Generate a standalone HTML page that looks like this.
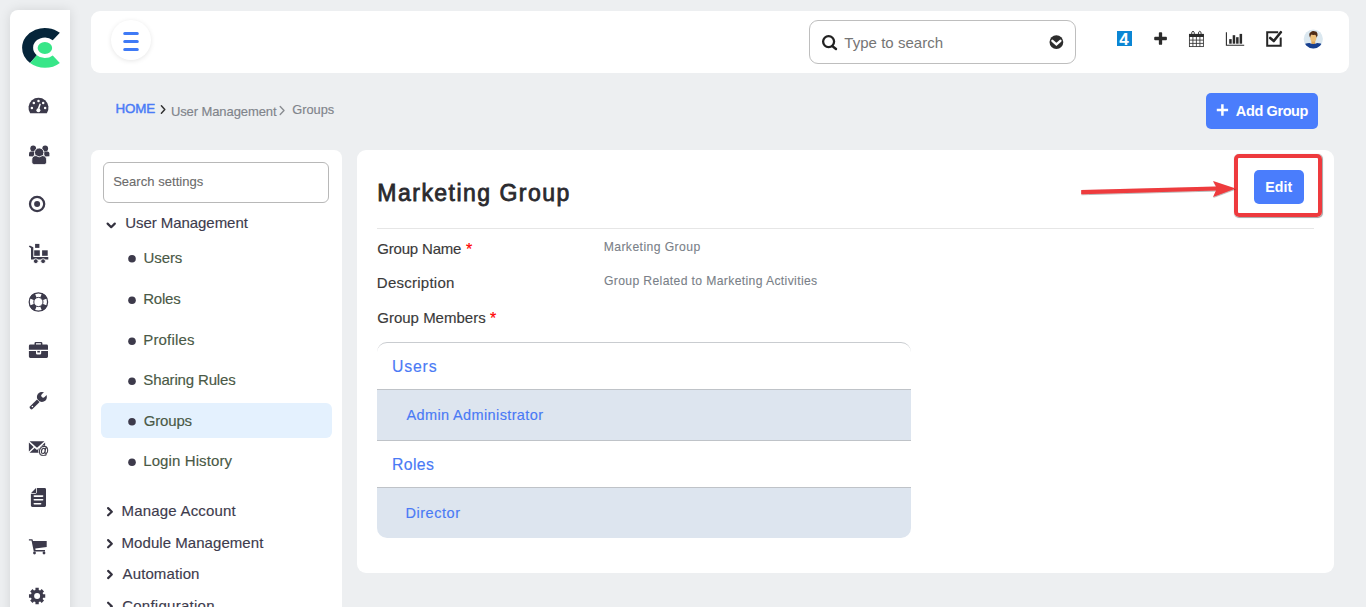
<!DOCTYPE html>
<html lang="en">
<head>
<meta charset="utf-8">
<title>Groups - Marketing Group</title>
<style>
*{box-sizing:border-box;margin:0;padding:0}
html,body{width:1366px;height:607px;overflow:hidden}
body{background:#edeff1;font-family:"Liberation Sans",sans-serif;color:#333;position:relative}
.abs{position:absolute}
.t{position:absolute;white-space:nowrap;line-height:1}
#rail{left:10px;top:10px;width:60px;height:620px;background:#fff;border-radius:8px 0 0 0;box-shadow:0 0 12px rgba(0,0,0,.11)}
#topbar{left:91px;top:11px;width:1258px;height:62px;background:#fff;border-radius:9px}
#burger{left:111px;top:20px;width:40px;height:40px;border-radius:50%;background:#fff;box-shadow:0 1px 5px rgba(0,0,0,.10)}
#search{left:809px;top:20px;width:267px;height:44px;border:1px solid #bebebe;border-radius:9px;background:#fff}
#addbtn{left:1206px;top:93px;width:112px;height:36px;background:#4a7dfc;border-radius:5px}
#setpanel{left:91px;top:150px;width:251px;height:480px;background:#fff;border-radius:8px 8px 0 0}
#setsearch{left:103px;top:162px;width:226px;height:41px;border:1px solid #b8b8b8;border-radius:6px;background:#fff}
#hl{left:101px;top:403px;width:231px;height:35px;background:#e4f1fe;border-radius:6px}
#main{left:357px;top:150px;width:977px;height:423px;background:#fff;border-radius:9px}
#hr{left:377px;top:228px;width:937px;height:1px;background:#e6e6e6}
#tbl{left:377px;top:342px;width:534px;height:196px;border-radius:10px;overflow:hidden;border-top:1px solid #c9ccd0;background:#fff}
.row{position:absolute;left:0;width:534px;background:#dde5ef}
.sep{position:absolute;left:0;width:534px;height:1px;background:#bfc3c8}
#editbtn{left:1254px;top:170px;width:50px;height:34px;background:#4a7dfc;border-radius:5px}
#redbox{left:1234px;top:154px;width:88px;height:62.5px;border:4px solid #ee3a3e;border-radius:5px;box-shadow:.4px .6px .8px rgba(0,0,0,.35)}
.dot{position:absolute;width:7.4px;height:7.4px;border-radius:50%;background:#3d3a4b;left:128.3px}
</style>
</head>
<body>
<div id="rail" class="abs"></div>
<svg class="abs" style="left:10px;top:10px" width="60" height="597" viewBox="10 10 60 597">
  <!-- logo -->
  <g id="logo">
    <path d="M59.86 32.84 A22.8 19.9 0 0 0 22.10 47.86 A22.8 19.9 0 0 0 30.07 62.97 L36.81 55.28 A11.8 10.2 0 0 1 33.10 47.86 A11.8 10.2 0 0 1 52.74 40.24 Z" fill="#05253a"/>
    <path d="M30.07 62.97 A22.8 19.9 0 0 0 59.86 62.88 L52.74 55.48 A11.8 10.2 0 0 1 36.81 55.28 Z" fill="#37e688"/>
    <ellipse cx="44.9" cy="48" rx="7.25" ry="6.05" fill="#37e688"/>
  </g>
<!--ICONS-->
  <g fill="#3c3a4b" stroke="none">
    <!-- dashboard -->
    <path d="M30.2 113.3 A10 10 0 1 1 46.8 113.3 Z"/>
    <g fill="#fff"><circle cx="31.9" cy="107.9" r="1.25"/><circle cx="33.8" cy="103.1" r="1.25"/><circle cx="38.5" cy="101.1" r="1.25"/><circle cx="43.2" cy="103.1" r="1.25"/><circle cx="45.1" cy="107.9" r="1.25"/>
      <path d="M39.6 103.6 L40.9 103.9 L39.3 109.0 L37.7 108.6 Z"/><circle cx="38.4" cy="110.3" r="2"/></g>
    <!-- users -->
    <circle cx="33.2" cy="148.4" r="2.9"/><circle cx="45.2" cy="148.4" r="2.9"/>
    <path d="M29 156.2 V153.6 Q29 151.6 31 151.6 H35.2 L33.4 156.4 Z"/>
    <path d="M49.4 156.2 V153.6 Q49.4 151.6 47.4 151.6 H43.2 L45 156.4 Z"/>
    <circle cx="39.2" cy="152.6" r="4.7" stroke="#fff" stroke-width="1"/>
    <path d="M31.8 162.2 V160 Q31.8 155.8 36 155.6 Q39.2 158.2 42.4 155.6 Q46.6 155.8 46.6 160 V162.2 Q46.6 164.6 44.2 164.6 H34.2 Q31.8 164.6 31.8 162.2 Z" stroke="#fff" stroke-width=".8"/>
    <!-- target -->
    <circle cx="37.1" cy="204" r="7.1" fill="none" stroke="#3c3a4b" stroke-width="2.3"/><circle cx="37.1" cy="204" r="3"/>
    <!-- dolly -->
    <path d="M28.8 246.6 L29.8 245.6 L33.3 247.3 V257 H48.3 V259.6 H31 V248.2 Z"/>
    <rect x="35.1" y="243.9" width="4.3" height="4"/><rect x="34.2" y="250.3" width="5.6" height="5.5"/><rect x="42.1" y="250.3" width="5.6" height="5.5"/>
    <circle cx="35.8" cy="261.2" r="2.4" stroke="#fff" stroke-width=".9"/><circle cx="43.1" cy="261.2" r="2.4" stroke="#fff" stroke-width=".9"/>
    <!-- life ring -->
    <circle cx="38.4" cy="302" r="9.2" fill="#fff" stroke="#3c3a4b" stroke-width="1.25"/>
    <path d="M38.4 302 L42.11 293.04 A9.7 9.7 0 0 1 47.36 298.29 Z M38.4 302 L47.36 305.71 A9.7 9.7 0 0 1 42.11 310.96 Z M38.4 302 L34.69 310.96 A9.7 9.7 0 0 1 29.44 305.71 Z M38.4 302 L29.44 298.29 A9.7 9.7 0 0 1 34.69 293.04 Z"/>
    <circle cx="38.4" cy="302" r="4.6" fill="#fff" stroke="#3c3a4b" stroke-width="1"/>
    <!-- briefcase -->
    <path d="M34.5 344.6 V343.2 Q34.5 341.9 35.8 341.9 H41.1 Q42.4 341.9 42.4 343.2 V344.6 H46.6 Q48 344.6 48 346 V349.8 H28.9 V346 Q28.9 344.6 30.3 344.6 Z M36 344.6 H40.9 V343.2 H36 Z" fill-rule="evenodd"/>
    <path d="M28.9 350.9 H36 V353.2 Q36 354.5 37.3 354.5 H39.9 Q41.2 354.5 41.2 353.2 V350.9 H48 V356.6 Q48 358 46.6 358 H30.3 Q28.9 358 28.9 356.6 Z"/>
    <rect x="37.3" y="350.9" width="2.6" height="1.6"/>
    <!-- wrench -->
    <circle cx="41.9" cy="397" r="5"/>
    <path d="M43.2 395.7 L48.6 390.3" stroke="#fff" stroke-width="4" stroke-linecap="round" fill="none"/>
    <path d="M37.3 399.2 L39.9 401.8 L32.5 409.1 Q31.4 409.9 30.3 408.8 Q29 407.4 29.9 406.4 Z"/>
    <path d="M36.3 398.5 L40.6 402.8" stroke="#fff" stroke-width=".7" fill="none"/>
    <circle cx="32.4" cy="406.5" r=".8" fill="#fff"/>
    <!-- mail @ -->
    <path d="M29.6 441.2 H44.4 L37 447.8 Z"/><path d="M28.9 442.6 L33.6 447 L28.9 451.4 Z"/><path d="M29.6 452.7 L34.6 447.9 L37 450 L39.4 447.9 L44.4 452.7 Z"/><path d="M45.1 442.6 V451 L40.4 447 Z"/>
    <circle cx="43.6" cy="451" r="5.4" fill="#fff"/>
    <!-- doc -->
    <path d="M36.8 487.9 H44.6 Q46 487.9 46 489.3 V505.6 Q46 507 44.6 507 H32.3 Q30.9 507 30.9 505.6 V493.7 H35.4 Q36.8 493.7 36.8 492.3 Z"/>
    <path d="M36 488 V492.9 H31.1 Z"/>
    <g fill="#fff"><rect x="33.5" y="495.3" width="9.9" height="1.6" rx=".8"/><rect x="33.5" y="499" width="9.9" height="1.6" rx=".8"/><rect x="33.5" y="502.9" width="7.9" height="1.6" rx=".8"/></g>
    <!-- cart -->
    <path d="M28.9 539.3 H32.4 L33 540.9 H46.7 V546.9 L35.3 548.6 L35.5 550 H45 V551.4 H33.8 L31.5 540.6 H28.9 Z"/>
    <circle cx="34.5" cy="553" r="1.4"/><circle cx="44" cy="553" r="1.4"/>
    <!-- gear -->
    <path d="M35.42 589.93 L35.45 587.87 L38.75 587.87 L38.78 589.93 L40.21 590.52 L41.69 589.08 L44.02 591.41 L42.58 592.89 L43.17 594.32 L45.23 594.35 L45.23 597.65 L43.17 597.68 L42.58 599.11 L44.02 600.59 L41.69 602.92 L40.21 601.48 L38.78 602.07 L38.75 604.13 L35.45 604.13 L35.42 602.07 L33.99 601.48 L32.51 602.92 L30.18 600.59 L31.62 599.11 L31.03 597.68 L28.97 597.65 L28.97 594.35 L31.03 594.32 L31.62 592.89 L30.18 591.41 L32.51 589.08 L33.99 590.52 Z"/><circle cx="37.1" cy="596" r="3" fill="#fff"/>
  </g>
<!--/ICONS-->
</svg>
<svg class="abs" style="left:36px;top:443px;will-change:transform" width="16" height="16" viewBox="36 443 16 16"><text x="43.7" y="454.4" font-family="Liberation Sans, sans-serif" font-size="10.5" text-anchor="middle" fill="#2e2c3a" stroke="#2e2c3a" stroke-width=".35">@</text></svg>
<div id="topbar" class="abs"></div>
<div id="burger" class="abs"></div>
<svg class="abs" style="left:120px;top:30px" width="22" height="23" viewBox="120 30 22 23">
  <g stroke="#3f7af6" stroke-width="3" stroke-linecap="round"><path d="M124.7 33.4H137.3M124.7 41.4H137.3M124.7 49.4H137.3"/></g>
</svg>
<div id="search" class="abs"></div>
<!-- top icons -->
<svg class="abs" style="left:810px;top:20px" width="524" height="44" viewBox="810 20 524 44">
  <circle cx="828.6" cy="41.6" r="5.5" fill="none" stroke="#222" stroke-width="2.3"/>
  <path d="M832.5 46.2 L836 49" stroke="#222" stroke-width="2.4" stroke-linecap="round"/>
  <circle cx="1056.4" cy="42.1" r="6.9" fill="#2d2d2d"/>
  <path d="M1052.4 40.8 L1056.4 44.4 L1060.4 40.8" fill="none" stroke="#fff" stroke-width="2.4" stroke-linecap="round" stroke-linejoin="miter"/>
  <rect x="1117" y="31" width="15" height="15" fill="#0b86d4"/>
  <text x="1124.1" y="45.1" font-family="Liberation Sans, sans-serif" font-size="17" font-weight="bold" text-anchor="middle" fill="#fff">4</text>
  <g fill="#2b2b2b"><rect x="1158.85" y="32.2" width="3.3" height="12.6" rx=".9"/><rect x="1154.2" y="36.85" width="12.7" height="3.3" rx=".9"/></g>
  <!-- calendar -->
  <g fill="none" stroke="#333" stroke-width=".85">
    <rect x="1189.4" y="34.3" width="14" height="12.3"/>
    <path d="M1192.9 36.8 V46.6 M1196.4 36.8 V46.6 M1199.9 36.8 V46.6 M1189.4 40.1 H1203.4 M1189.4 43.4 H1203.4"/>
  </g>
  <rect x="1189" y="34" width="14.8" height="3" fill="#2b2b2b"/>
  <g fill="none" stroke="#333" stroke-width=".9"><path d="M1191.6 34.2 A1.4 3 0 0 1 1194.4 34.2 M1198.4 34.2 A1.4 3 0 0 1 1201.2 34.2"/></g>
  <!-- chart -->
  <path d="M1226.4 32.2 V45.3 H1244.2" fill="none" stroke="#2b2b2b" stroke-width="1.1"/>
  <g fill="#2b2b2b"><rect x="1229.2" y="39.1" width="2.5" height="4.6"/><rect x="1232.7" y="35.2" width="2.5" height="8.5"/><rect x="1236.1" y="37.2" width="2.5" height="6.5"/><rect x="1239.6" y="33.9" width="2.5" height="9.8"/></g>
  <!-- check square -->
  <path d="M1278.2 32.2 H1267.2 V45.7 H1280.7 V37.6" fill="none" stroke="#262626" stroke-width="2"/>
  <path d="M1270.2 38 L1273.8 41 L1280.8 32.2" fill="none" stroke="#262626" stroke-width="2.6" stroke-linecap="round" stroke-linejoin="round"/>
  <!-- avatar -->
  <clipPath id="avc"><circle cx="1313.3" cy="39" r="9.6"/></clipPath>
  <g clip-path="url(#avc)">
    <rect x="1303" y="29" width="21" height="21" fill="#dbe8f0"/>
    <rect x="1311.4" y="39.5" width="3.8" height="4.6" fill="#dfa75a"/>
    <path d="M1302.6 47 Q1303.6 43.4 1309.4 43.1 Q1313.3 44.9 1317.2 43.1 Q1323 43.4 1324 47 V50 H1302.6 Z" fill="#173f8f"/>
    <ellipse cx="1313.3" cy="37.8" rx="3.1" ry="3.9" fill="#edc07a"/>
    <path d="M1310.1 37.8 Q1308.2 33.6 1310.6 32.2 Q1312.6 30.4 1314.6 31.3 Q1317 31.4 1317.4 33.4 Q1318.2 35 1316.5 37.8 Q1316.4 35.4 1315 34.7 Q1312.6 35.3 1311.5 34.6 Q1310.4 35.6 1310.1 37.8 Z" fill="#4f2c15"/>
  </g>
</svg>
<div id="addbtn" class="abs"></div>
<svg class="abs" style="left:1214px;top:102px" width="17" height="16" viewBox="1214 102 17 16"><path d="M1222.4 104.3 V115.7 M1216.8 110 H1228.1" stroke="#fff" stroke-width="2.5"/></svg>
<div id="setpanel" class="abs"></div>
<div id="setsearch" class="abs"></div>
<div id="hl" class="abs"></div>
<svg class="abs" style="left:100px;top:100px" width="200" height="507" viewBox="100 100 200 507" fill="none" stroke-linecap="round" stroke-linejoin="round">
  <path d="M161.4 105.8 L164.8 109.5 L161.4 113.2" stroke="#333" stroke-width="1.5"/>
  <path d="M280.2 106.4 L284 110.5 L280.2 114.6" stroke="#8a8d92" stroke-width="1.4"/>
  <g fill="#3d3a4b" stroke="none"><circle cx="132" cy="258.8" r="3.8"/><circle cx="132" cy="300.2" r="3.8"/><circle cx="132" cy="341.3" r="3.8"/><circle cx="132" cy="381.2" r="3.8"/><circle cx="132" cy="421.7" r="3.8"/><circle cx="132" cy="462.2" r="3.8"/></g>
  <g stroke="#34323f" stroke-width="2.2">
    <path d="M107.6 223.6 L111.2 227.2 L114.8 223.6"/>
    <path d="M108.1 508.1 L111.8 511.7 L108.1 515.3"/>
    <path d="M108.1 540.1 L111.8 543.7 L108.1 547.3"/>
    <path d="M108.1 570.9 L111.8 574.5 L108.1 578.1"/>
    <path d="M108.1 602.7 L111.8 606.3 L108.1 609.9"/>
  </g>
</svg>
<div id="main" class="abs"></div>
<div id="hr" class="abs"></div>
<div id="tbl" class="abs">
  <div class="sep" style="top:46px"></div>
  <div class="row" style="top:47px;height:50px"></div>
  <div class="sep" style="top:96.7px"></div>
  <div class="sep" style="top:143.7px"></div>
  <div class="row" style="top:144.7px;height:52px"></div>
</div>
<div id="editbtn" class="abs"></div>
<div id="redbox" class="abs"></div>
<svg class="abs" style="left:1075px;top:170px" width="170" height="40" viewBox="1075 170 170 40">
  <defs><filter id="ash" x="-5%" y="-30%" width="110%" height="160%"><feDropShadow dx=".4" dy=".7" stdDeviation=".35" flood-color="#000" flood-opacity=".4"/></filter></defs>
  <path d="M1081.2 190 L1216 186.6 L1213 181.1 L1235.6 188.5 L1213 197 L1216 190.4 L1081.2 194.3 Z" fill="#ee3a3e" filter="url(#ash)"/>
</svg>
<div class="t" id="tsearch" style="left:844.29px;top:34.90px;font-size:15px;color:#757575;letter-spacing:0.037px">Type to search</div>
<div class="t" id="home" style="left:115.57px;top:101.56px;font-size:13.4px;color:#4a7bf7;letter-spacing:-0.212px;-webkit-text-stroke:0.45px #4a7bf7">HOME</div>
<div class="t" id="bcum" style="left:170.89px;top:105.00px;font-size:13px;color:#80848b;letter-spacing:-0.091px;-webkit-text-stroke:0.15px #80848b">User Management</div>
<div class="t" id="bcgr" style="left:292.22px;top:104.06px;font-size:12.8px;color:#80848b;letter-spacing:0.006px;-webkit-text-stroke:0.15px #80848b">Groups</div>
<div class="t" id="addg" style="left:1235.87px;top:103.83px;font-size:14.5px;color:#fff;font-weight:bold;letter-spacing:-0.395px">Add Group</div>
<div class="t" id="ssearch" style="left:113.13px;top:175.20px;font-size:13px;color:#6b6b6b;letter-spacing:0.037px;-webkit-text-stroke:0.1px #6b6b6b">Search settings</div>
<div class="t" id="navum" style="left:125.15px;top:215.40px;font-size:15px;color:#3d3b4d;letter-spacing:-0.049px;-webkit-text-stroke:0.15px #3d3b4d">User Management</div>
<div class="t" id="susers" style="left:143.44px;top:250.00px;font-size:15px;color:#4a5946;letter-spacing:-0.059px;-webkit-text-stroke:0.15px #4a5946">Users</div>
<div class="t" id="sroles" style="left:143.22px;top:291.40px;font-size:15px;color:#4a5946;letter-spacing:-0.231px;-webkit-text-stroke:0.15px #4a5946">Roles</div>
<div class="t" id="sprof" style="left:143.22px;top:332.10px;font-size:15px;color:#4a5946;letter-spacing:0.171px;-webkit-text-stroke:0.15px #4a5946">Profiles</div>
<div class="t" id="sshare" style="left:143.37px;top:372.00px;font-size:15px;color:#4a5946;letter-spacing:-0.157px;-webkit-text-stroke:0.15px #4a5946">Sharing Rules</div>
<div class="t" id="sgroups" style="left:143.73px;top:413.30px;font-size:15px;color:#4a5946;letter-spacing:-0.157px;-webkit-text-stroke:0.15px #4a5946">Groups</div>
<div class="t" id="slogin" style="left:143.24px;top:453.00px;font-size:15px;color:#4a5946;letter-spacing:0.100px;-webkit-text-stroke:0.15px #4a5946">Login History</div>
<div class="t" id="nma" style="left:121.57px;top:503.30px;font-size:15px;color:#3d3b4d;letter-spacing:0.189px;-webkit-text-stroke:0.15px #3d3b4d">Manage Account</div>
<div class="t" id="nmm" style="left:121.57px;top:535.20px;font-size:15px;color:#3d3b4d;letter-spacing:0.051px;-webkit-text-stroke:0.15px #3d3b4d">Module Management</div>
<div class="t" id="nau" style="left:122.58px;top:566.00px;font-size:15px;color:#3d3b4d;letter-spacing:0.109px;-webkit-text-stroke:0.15px #3d3b4d">Automation</div>
<div class="t" id="nco" style="left:122.13px;top:597.80px;font-size:15px;color:#3d3b4d;letter-spacing:0.263px;-webkit-text-stroke:0.15px #3d3b4d">Configuration</div>
<div class="t" id="title" style="left:377.35px;top:181.93px;font-size:23px;color:#2a2a2e;letter-spacing:1.474px;-webkit-text-stroke:0.8px #2a2a2e">Marketing Group</div>
<div class="t" id="lgn" style="left:377.27px;top:241.00px;font-size:15px;color:#3a3a3a;letter-spacing:-0.190px;-webkit-text-stroke:0.15px #3a3a3a">Group Name</div>
<div class="t" id="ldesc" style="left:376.81px;top:275.00px;font-size:15px;color:#3a3a3a;letter-spacing:0.254px;-webkit-text-stroke:0.15px #3a3a3a">Description</div>
<div class="t" id="lgm" style="left:377.27px;top:309.60px;font-size:15px;color:#3a3a3a;letter-spacing:0.001px;-webkit-text-stroke:0.15px #3a3a3a">Group Members</div>
<div class="t" id="vmg" style="left:603.63px;top:240.77px;font-size:12.2px;color:#7a7f88;letter-spacing:0.418px;-webkit-text-stroke:0.1px #7a7f88">Marketing Group</div>
<div class="t" id="vdesc" style="left:603.92px;top:274.57px;font-size:12.2px;color:#7a7f88;letter-spacing:0.355px;-webkit-text-stroke:0.1px #7a7f88">Group Related to Marketing Activities</div>
<div class="t" id="tusers" style="left:391.92px;top:359.03px;font-size:15.8px;color:#4a7af5;letter-spacing:0.856px;-webkit-text-stroke:0.15px #4a7af5">Users</div>
<div class="t" id="tadmin" style="left:406.51px;top:407.73px;font-size:14.5px;color:#4a7af5;letter-spacing:0.373px;-webkit-text-stroke:0.15px #4a7af5">Admin Administrator</div>
<div class="t" id="troles" style="left:392.00px;top:456.53px;font-size:15.8px;color:#4a7af5;letter-spacing:0.352px;-webkit-text-stroke:0.15px #4a7af5">Roles</div>
<div class="t" id="tdir" style="left:405.51px;top:505.63px;font-size:14.5px;color:#4a7af5;letter-spacing:0.532px;-webkit-text-stroke:0.15px #4a7af5">Director</div>
<div class="t" id="edit" style="left:1265.35px;top:179.78px;font-size:14.2px;color:#fff;font-weight:bold;letter-spacing:0.036px">Edit</div>
<div class="t" id="star1" style="left:465.88px;top:242.40px;font-size:16px;color:#f00;-webkit-text-stroke:0.2px #f00">*</div>
<div class="t" id="star2" style="left:489.98px;top:311.00px;font-size:16px;color:#f00;-webkit-text-stroke:0.2px #f00">*</div>
</body>
</html>
